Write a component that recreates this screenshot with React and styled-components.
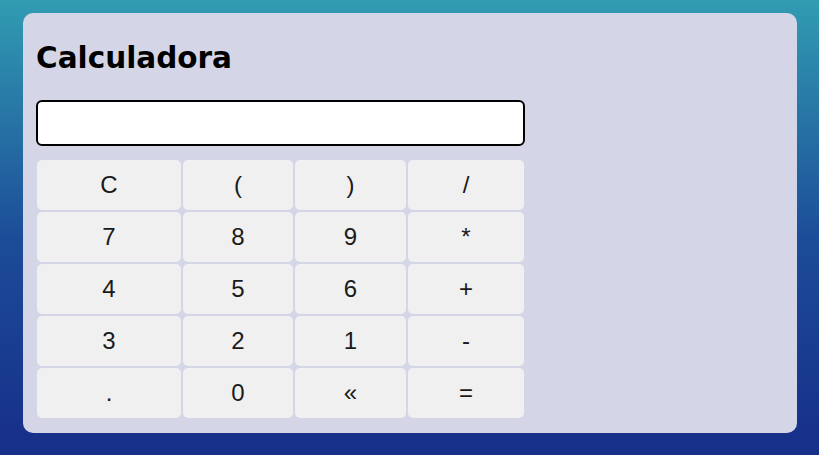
import React, { useState } from "react";
import styled, { createGlobalStyle } from "styled-components";

const GlobalStyle = createGlobalStyle`
  html {
    min-height: 100%;
    background: linear-gradient(to bottom, #319cb2 0px, #1c4c98 240px, #17308a 440px, #17308a 100%);
  }
  body {
    margin: 0;
    font-family: "Liberation Sans", Arial, sans-serif;
  }
`;

const Page = styled.div`
  padding: 13px 22px 22px 23px;
`;

const Card = styled.div`
  width: 774px;
  height: 420px;
  box-sizing: border-box;
  padding: 28px 13px 15px 13px;
  background: #d4d6e8;
  border-radius: 10px;
`;

const Title = styled.h2`
  margin: 0 0 25px 0;
  font-family: "DejaVu Sans", sans-serif;
  font-weight: bold;
  font-size: 29.5px;
  line-height: 34px;
  color: #000;
`;

const Display = styled.input`
  display: block;
  width: 489px;
  height: 46px;
  box-sizing: border-box;
  border: 2px solid #000;
  border-radius: 6px;
  background: #fff;
  font-size: 24px;
  padding: 0 10px;
  outline: none;
`;

const Keypad = styled.div`
  margin-top: 14px;
  margin-left: 1px;
  display: grid;
  grid-template-columns: 144px 110px 111px 116px;
  grid-auto-rows: 50px;
  gap: 2px;
`;

const Key = styled.button`
  border: none;
  border-radius: 5px;
  background: #f0f0f0;
  color: #1a1a1a;
  font-family: "Liberation Sans", Arial, sans-serif;
  font-size: 24px;
  padding: 0;
  cursor: pointer;
  &:hover {
    background: #e6e6e6;
  }
`;

const keys = [
  "C", "(", ")", "/",
  "7", "8", "9", "*",
  "4", "5", "6", "+",
  "3", "2", "1", "-",
  ".", "0", "«", "=",
];

export default function App() {
  const [expr, setExpr] = useState("");

  const press = (k) => {
    if (k === "C") return setExpr("");
    if (k === "«") return setExpr((e) => e.slice(0, -1));
    if (k === "=") {
      try {
        // eslint-disable-next-line no-new-func
        setExpr(String(Function(`return (${expr})`)()));
      } catch (err) {
        setExpr("Error");
      }
      return;
    }
    setExpr((e) => e + k);
  };

  return (
    <>
      <GlobalStyle />
      <Page>
        <Card>
          <Title>Calculadora</Title>
          <Display value={expr} onChange={(e) => setExpr(e.target.value)} />
          <Keypad>
            {keys.map((k) => (
              <Key key={k} onClick={() => press(k)}>
                {k}
              </Key>
            ))}
          </Keypad>
        </Card>
      </Page>
    </>
  );
}
